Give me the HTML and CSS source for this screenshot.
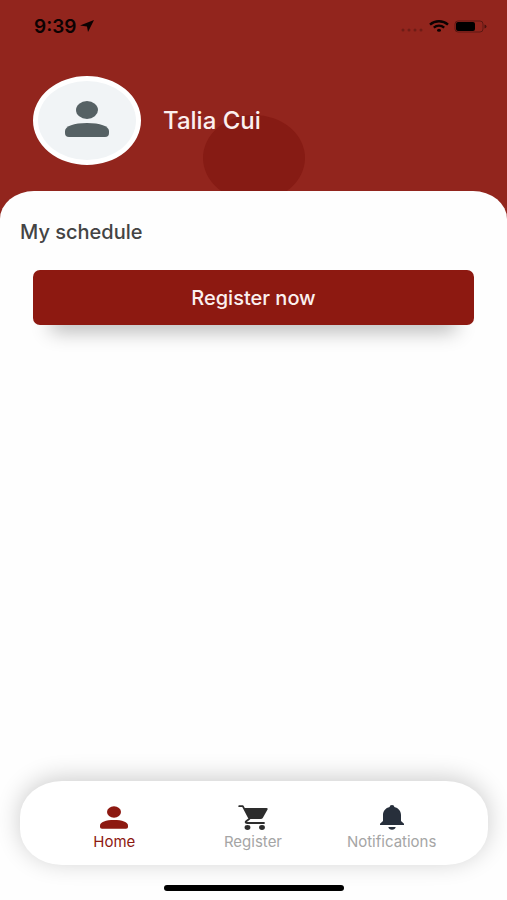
FILE: index.html
```html
<!DOCTYPE html>
<html lang="en">
  <head>
    <meta charset="UTF-8" />
    <meta name="viewport" content="width=device-width, initial-scale=1.0" />
    <title>My schedule</title>
    <link rel="stylesheet" href="styles.css">
  </head>
  <body>
    <header class="header">
      <div class="status-bar">
        <div class="clock">
          <span>9:39</span>
          <svg width="14" height="12" viewBox="0 0 14 12" fill="currentColor">
            <path d="M14 0 8 12 7 6.500 0 5.500z" />
          </svg>
        </div>
        <div class="indicators">
          <svg class="signal" width="24" height="12" viewBox="0 0 24 12" fill="currentColor">
            <circle cx="3" cy="10" r="1.500" />
            <circle cx="9" cy="10" r="1.500" />
            <circle cx="15" cy="10" r="1.500" />
            <circle cx="21" cy="10" r="1.500" />
          </svg>
          <svg width="20" height="12" viewBox="0 0 20 12" fill="none" stroke="currentColor" stroke-width="2.400">
            <path d="M1 4.600C6 .2 14 .2 19 4.600" />
            <path d="M4.800 7.600c3-2.600 7.400-2.600 10.400 0" />
            <ellipse cx="10" cy="10.300" rx="2" ry="1.500" fill="currentColor" stroke="none" />
          </svg>
          <svg width="33" height="13" viewBox="0 0 33 13">
            <rect x="1" y="1" width="28" height="11" rx="3" fill="none" stroke="#000" stroke-opacity=".35" />
            <rect x="2" y="2" width="19" height="9" rx="2" />
            <path d="M30.500 4.500q2 .5 2 2t-2 2z" fill-opacity=".5" />
          </svg>
        </div>
      </div>
      <div class="profile">
        <div class="avatar">
          <svg width="44" height="36" viewBox="0 0 44 36" fill="currentColor">
            <ellipse cx="22" cy="9" rx="11" ry="9" />
            <path d="M0 32v-2C0 25 9 22 22 22s22 3 22 8v2q0 4-4 4H4q-4 0-4-4z" />
          </svg>
        </div>
        <h1 class="name">Talia Cui</h1>
      </div>
    </header>

    <main class="sheet">
      <h2 class="title">My schedule</h2>
      <button type="button" class="register">Register now</button>
    </main>

    <footer class="footer">
      <nav class="tabs">
        <a href="#home" class="tab active">
          <svg width="28" height="24" viewBox="0 0 28 24" fill="currentColor">
            <ellipse cx="14" cy="6.500" rx="7" ry="5.800" />
            <path d="M0 21.500v-1.500C0 16.500 6 14.500 14 14.500s14 2 14 5.500v1.500q0 1.800-2 1.800H2q-2 0-2-1.800z" />
          </svg>
          <span>Home</span>
        </a>
        <a href="#register" class="tab">
          <svg class="cart" width="30" height="25" viewBox="0 0 30 25">
            <path d="M1.200 1.200h3.600l6.700 12.600-3.600 2.700q-.8 1.500 1.400 1.500H26" fill="none" stroke="currentColor" stroke-width="1.800" stroke-linecap="round" stroke-linejoin="round" />
            <path d="M6 3h22.500q1.600.1 1 1.500l-4.600 8.300q-.7 1.200-2.300 1.200H11.500z" fill="currentColor" />
            <ellipse cx="9.500" cy="22.500" rx="2.900" ry="2.400" fill="currentColor" />
            <ellipse cx="24" cy="22.500" rx="2.900" ry="2.400" fill="currentColor" />
          </svg>
          <span>Register</span>
        </a>
        <a href="#notifications" class="tab">
          <svg class="bell" width="24" height="25" viewBox="0 0 24 25" fill="currentColor">
            <path d="M12 0c1.500 0 2.300.8 2.300 2C18.500 3 21 6 21 10v6l3 2.800v1.300H0v-1.300L3 16v-6c0-4 2.500-7 6.700-8 0-1.200.8-2 2.300-2z" />
            <path d="M8.300 22h7.400q-.7 2.700-3.700 2.700T8.300 22z" />
          </svg>
          <span>Notifications</span>
        </a>
      </nav>
      <div class="home-indicator"></div>
    </footer>
  </body>
</html>
```

FILE: styles.css
```css
* {
  box-sizing: border-box;
}

body {
  display: flex;
  flex-direction: column;
  min-height: 100vh;
  margin: 0;
  font-family: Inter, "Open Sans", sans-serif;
  background-color: #fefefe;
}

.header {
  position: relative;
  padding-bottom: 60px;
  background-color: #92251d;
}

/* dark bubble behind the name, cut off by the sheet */
.header::after {
  content: "";
  position: absolute;
  left: 40%;
  bottom: 24px;
  width: 102px;
  height: 86px;
  border-radius: 50%;
  background-color: #861b14;
}

.status-bar {
  display: flex;
  justify-content: space-between;
  align-items: center;
  height: 52px;
  padding: 0 20px 0 34px;
  color: #0c0202;
}

.clock {
  display: flex;
  align-items: center;
  gap: 4px;
  font-size: 19px;
  font-weight: 600;
}

.indicators {
  display: flex;
  align-items: center;
  gap: 5px;
}

.signal {
  opacity: 0.25;
}

.profile {
  position: relative;
  z-index: 1;
  display: flex;
  align-items: center;
  gap: 22px;
  padding: 24px 33px 0;
}

.avatar {
  display: flex;
  justify-content: center;
  align-items: center;
  width: 108px;
  height: 89px;
  padding-bottom: 4px;
  border: 5px solid #fff;
  border-radius: 50%;
  background-color: #f1f4f6;
  color: #566164;
}

.name {
  margin: 0;
  font-size: 24px;
  font-weight: 500;
  color: #fbf0ef;
}

.sheet {
  position: relative;
  z-index: 1;
  flex: 1;
  margin-top: -34px;
  padding: 28px 33px;
  border-radius: 34px 34px 0 0 / 28px 28px 0 0;
  background-color: #fefefe;
}

.title {
  margin: 0 -13px 24px;
  font-size: 20px;
  font-weight: 500;
  line-height: 27px;
  color: #444;
}

.register {
  display: block;
  width: 100%;
  height: 55px;
  padding: 0;
  border: none;
  border-radius: 7px;
  background-color: #8d1911;
  box-shadow: 0 24px 20px -18px rgba(0, 0, 0, 0.3);
  font-family: inherit;
  font-size: 20px;
  font-weight: 500;
  color: #fbf0ef;
  cursor: pointer;
}

.footer {
  position: relative;
  z-index: 1;
  padding: 0 19px 9px 20px;
}

.tabs {
  display: grid;
  grid-template-columns: repeat(3, 1fr);
  height: 84px;
  padding: 24px 27px 0 25px;
  border-radius: 42px / 36px;
  background-color: #fff;
  box-shadow: 0 -3px 24px rgba(0, 0, 0, 0.2);
}

.tab {
  display: flex;
  flex-direction: column;
  align-items: center;
  font-size: 15px;
  line-height: 18px;
  color: #a5a5a5;
  text-decoration: none;
}

.tab svg {
  height: 25px;
  margin-bottom: 3px;
}

.tab.active {
  color: #8d1911;
}

.cart {
  color: #2d2d2d;
}

.bell {
  color: #272f3b;
}

.home-indicator {
  width: 180px;
  height: 6px;
  margin: 20px auto 0;
  border-radius: 3px;
  background-color: #000;
}
```
